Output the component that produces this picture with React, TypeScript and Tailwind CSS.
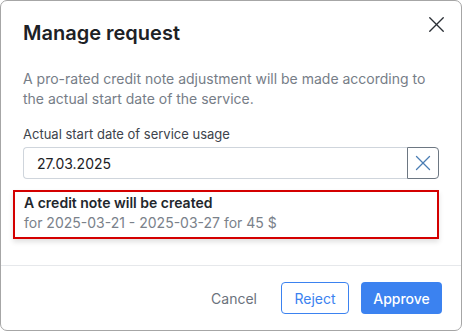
import { X } from "lucide-react";

export default function App() {
	return (
		<div
			className="w-[463px] h-[332px] bg-white"
			style={{ fontFamily: "Inter, 'Liberation Sans', sans-serif" }}
		>
			<div className="w-[462px] h-[331px] border border-[#a6a6a6] rounded-[7px] bg-white flex flex-col">
				{/* Header */}
				<div className="relative px-[22px] pt-[18px]">
					<h2 className="text-[20px] leading-[28px] font-semibold text-[#1d2125]">
						Manage request
					</h2>
					<button
						type="button"
						className="absolute top-[10px] right-[11px] text-[#2a2f35]"
					>
						<X className="w-[27px] h-[27px]" strokeWidth={1.2} />
					</button>
				</div>

				{/* Body */}
				<div className="px-[22px] pt-[22px]">
					<p className="text-[14px] leading-[20px] text-[#767d87]">
						A pro-rated credit note adjustment will be made according to the
						actual start date of the service.
					</p>

					<label className="block mt-[16px] text-[13px] leading-[18px] text-[#3d434b]">
						Actual start date of service usage
					</label>
					<div className="mt-[4px] flex h-[32px]">
						<div className="flex-1 flex items-center border border-[#cfd5dc] border-r-0 rounded-l-[4px] pl-[13px] text-[14px] text-[#1d2125]">
							27.03.2025
						</div>
						<button
							type="button"
							className="w-[32px] flex items-center justify-center border border-[#6d7782] rounded-r-[4px] text-[#4b7db3]"
						>
							<X className="w-[26px] h-[26px]" strokeWidth={1.2} />
						</button>
					</div>

					<div className="mt-[11px] -ml-[10px] h-[49px] border-2 border-[#d40000] pl-[9px] pt-[1px] shadow-[0_3px_5px_rgba(0,0,0,0.12)]">
						<div className="text-[14px] leading-[20px] font-semibold text-[#22272d]">
							A credit note will be created
						</div>
						<div className="text-[14px] leading-[20px] text-[#7a818a]">
							for 2025-03-21 - 2025-03-27 for 45 $
						</div>
					</div>
				</div>

				{/* Footer */}
				<div className="mt-[26px] border-t border-[#e6e8eb] px-[19px] pt-[16px] flex justify-end gap-[12px]">
					<button
						type="button"
						className="h-[32px] px-[12px] text-[14px] text-[#6b727c]"
					>
						Cancel
					</button>
					<button
						type="button"
						className="h-[32px] w-[68px] rounded-[4px] border border-[#3b82f0] text-[14px] text-[#3b82f0] bg-white"
					>
						Reject
					</button>
					<button
						type="button"
						className="h-[32px] w-[81px] rounded-[4px] bg-[#3b82f0] text-[14px] font-medium text-white"
					>
						Approve
					</button>
				</div>
			</div>
		</div>
	);
}
